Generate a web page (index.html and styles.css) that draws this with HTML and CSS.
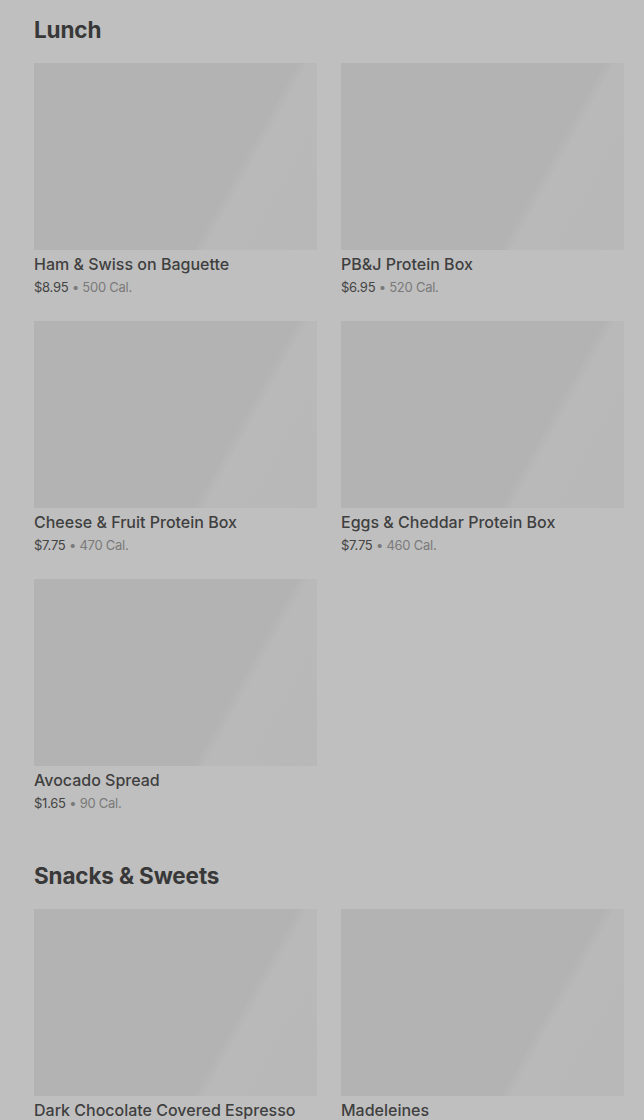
FILE: index.html
```html
<!DOCTYPE html>
<html>
<head>
<meta charset="utf-8">
<link rel="stylesheet" href="styles.css">
</head>
<body>
<section class="section">
  <h2 class="section-title">Lunch</h2>
  <div class="grid">
    <div class="card"><div class="thumb"></div><div class="name">Ham &amp; Swiss on Baguette</div><div class="meta"><span class="price">$8.95</span> • 500 Cal.</div></div>
    <div class="card"><div class="thumb"></div><div class="name">PB&amp;J Protein Box</div><div class="meta"><span class="price">$6.95</span> • 520 Cal.</div></div>
    <div class="card"><div class="thumb"></div><div class="name">Cheese &amp; Fruit Protein Box</div><div class="meta"><span class="price">$7.75</span> • 470 Cal.</div></div>
    <div class="card"><div class="thumb"></div><div class="name">Eggs &amp; Cheddar Protein Box</div><div class="meta"><span class="price">$7.75</span> • 460 Cal.</div></div>
    <div class="card"><div class="thumb"></div><div class="name">Avocado Spread</div><div class="meta"><span class="price">$1.65</span> • 90 Cal.</div></div>
  </div>
</section>
<section class="section section-next">
  <h2 class="section-title">Snacks &amp; Sweets</h2>
  <div class="grid">
    <div class="card"><div class="thumb"></div><div class="name">Dark Chocolate Covered Espresso</div><div class="meta"><span class="price">$3.45</span> • 210 Cal.</div></div>
    <div class="card"><div class="thumb"></div><div class="name">Madeleines</div><div class="meta"><span class="price">$2.95</span> • 240 Cal.</div></div>
  </div>
</section>
</body>
</html>
```
FILE: styles.css
```css
html, body {
  margin: 0;
  padding: 0;
  background: #bfbfbf;
  height: 1120px;
  overflow: hidden;
}
body {
  font-family: Inter, "Liberation Sans", sans-serif;
  color: #3d3d3d;
}
.section {
  padding: 16px 20px 0 34px;
}
.section-next {
  padding-top: 49px;
}
.section-title {
  margin: 0 0 19px;
  font-size: 22.5px;
  line-height: 28px;
  font-weight: 700;
  color: #383838;
  letter-spacing: -0.15px;
}
.grid {
  display: grid;
  grid-template-columns: 283px 283px;
  column-gap: 24px;
  row-gap: 24px;
}
.thumb {
  height: 187px;
  background: linear-gradient(119deg, #b3b3b3 0%, #b3b3b3 68%, #b9b9b9 71%, #b8b8b8 100%);
}
.name {
  margin-top: 2px;
  font-size: 16px;
  line-height: 24px;
  font-weight: 500;
  color: #3f3f3f;
}
.meta {
  margin-top: 1px;
  font-size: 13px;
  line-height: 20px;
  color: #7a7a7a;
  letter-spacing: -0.25px;
}
.price {
  color: #444444;
}
```
